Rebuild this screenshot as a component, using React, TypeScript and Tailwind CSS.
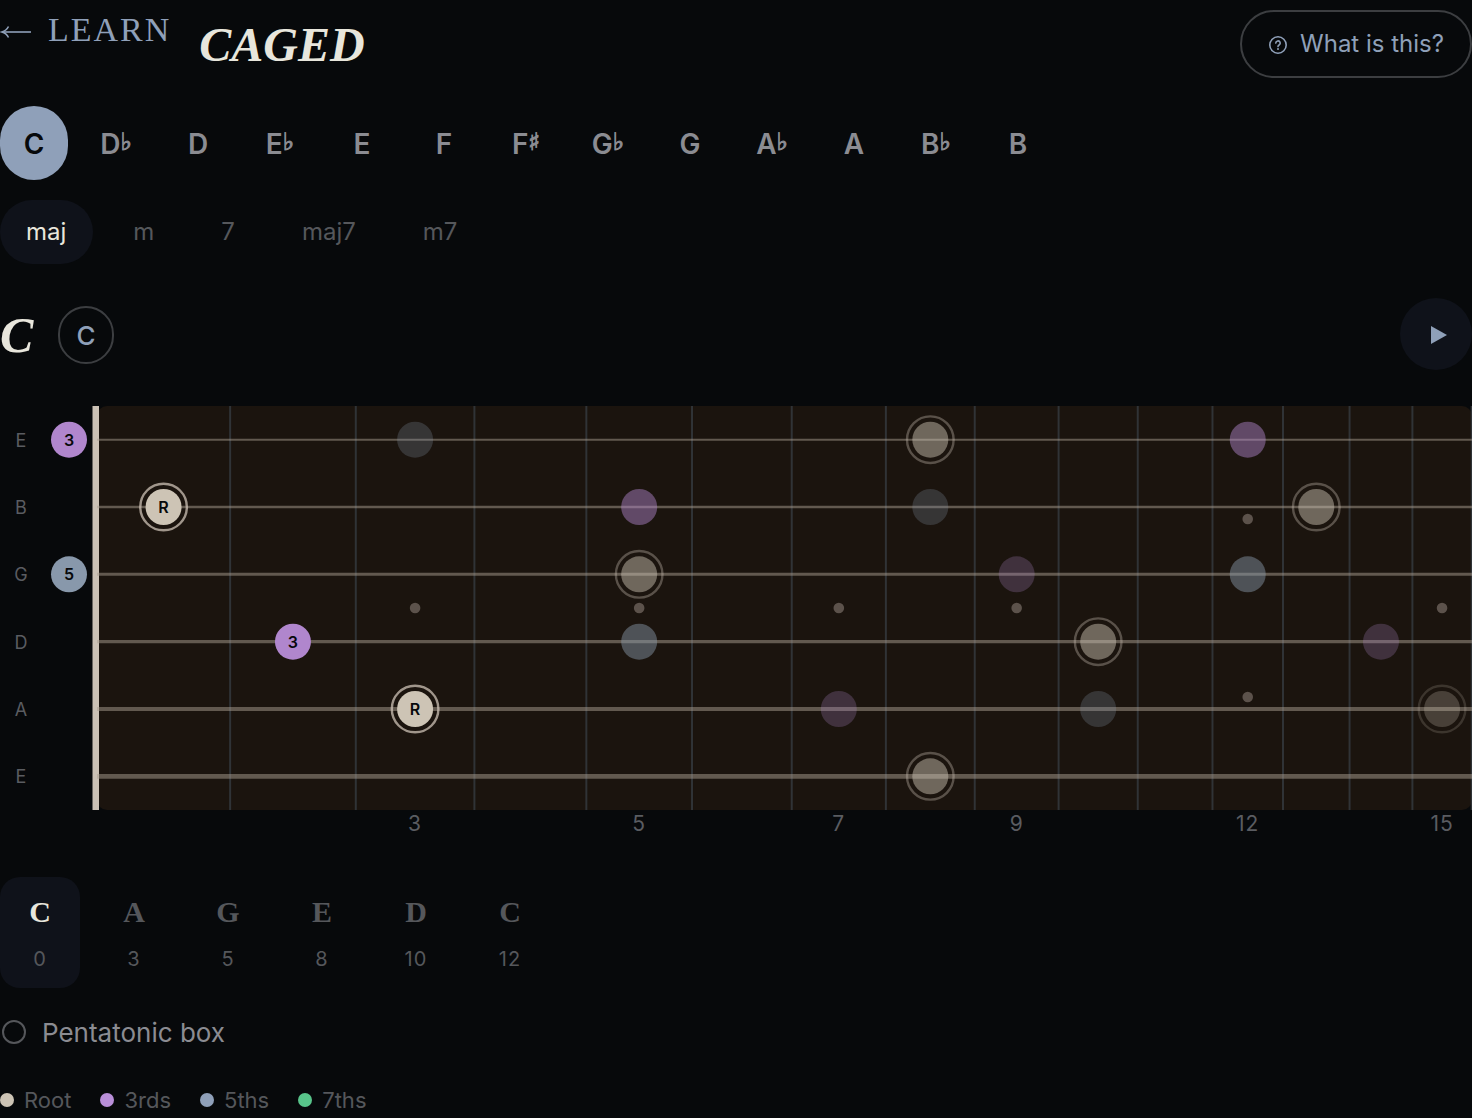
import { useState } from 'react';
import clsx from 'clsx';

type Role = 'root' | 'third' | 'fifth';
type Level = 'active' | 'near' | 'far';

interface FretNote {
  string: number;
  fret: number;
  role: Role;
  level: Level;
}

const ROOTS = ['C', 'D♭', 'D', 'E♭', 'E', 'F', 'F♯', 'G♭', 'G', 'A♭', 'A', 'B♭', 'B'];
const QUALITIES = ['maj', 'm', '7', 'maj7', 'm7'];
const STRINGS = ['E', 'B', 'G', 'D', 'A', 'E'];
const STRING_WIDTHS = [2, 2.6, 3, 3.4, 4, 4.6];

const SHAPES = [
  { name: 'C', fret: 0 },
  { name: 'A', fret: 3 },
  { name: 'G', fret: 5 },
  { name: 'E', fret: 8 },
  { name: 'D', fret: 10 },
  { name: 'C', fret: 12 },
];

const LEGEND = [
  { label: 'Root', dot: 'bg-[#cdc4b5]' },
  { label: '3rds', dot: 'bg-[#b98fd9]' },
  { label: '5ths', dot: 'bg-[#8fa0b9]' },
  { label: '7ths', dot: 'bg-[#58c48a]' },
];

const NOTES: FretNote[] = [
  { string: 0, fret: 0, role: 'third', level: 'active' },
  { string: 1, fret: 1, role: 'root', level: 'active' },
  { string: 2, fret: 0, role: 'fifth', level: 'active' },
  { string: 3, fret: 2, role: 'third', level: 'active' },
  { string: 4, fret: 3, role: 'root', level: 'active' },
  { string: 0, fret: 3, role: 'fifth', level: 'far' },
  { string: 0, fret: 8, role: 'root', level: 'near' },
  { string: 0, fret: 12, role: 'third', level: 'near' },
  { string: 1, fret: 5, role: 'third', level: 'near' },
  { string: 1, fret: 8, role: 'fifth', level: 'far' },
  { string: 1, fret: 13, role: 'root', level: 'near' },
  { string: 2, fret: 5, role: 'root', level: 'near' },
  { string: 2, fret: 9, role: 'third', level: 'far' },
  { string: 2, fret: 12, role: 'fifth', level: 'near' },
  { string: 3, fret: 5, role: 'fifth', level: 'near' },
  { string: 3, fret: 10, role: 'root', level: 'near' },
  { string: 3, fret: 14, role: 'third', level: 'far' },
  { string: 4, fret: 7, role: 'third', level: 'far' },
  { string: 4, fret: 10, role: 'fifth', level: 'far' },
  { string: 4, fret: 15, role: 'root', level: 'far' },
  { string: 5, fret: 8, role: 'root', level: 'near' },
];

const ROLE_FILL: Record<Role, string> = { root: '#cdc4b5', third: '#b086cd', fifth: '#8898ab' };
const ROLE_LABEL: Record<Role, string> = { root: 'R', third: '3', fifth: '5' };
const LEVEL_OPACITY: Record<Level, number> = { active: 1, near: 0.47, far: 0.25 };

const NUT_X = 97;
const SCALE = 2372;
const BOARD_H = 404;
const ROW_H = BOARD_H / 6;

// Equal-tempered fret spacing
const fretX = (n: number) => NUT_X + SCALE * (1 - Math.pow(2, -n / 12));
const noteX = (n: number) => (n === 0 ? 69 : (fretX(n - 1) + fretX(n)) / 2);
const stringY = (s: number) => ROW_H * (s + 0.5);

function Fretboard() {
  const frets = Array.from({ length: 15 }, (_, i) => i + 1);

  return (
    <svg
      viewBox="0 0 1472 436"
      className="block w-full h-auto font-['Inter',sans-serif]"
      role="img"
      aria-label="C major, C shape on the fretboard"
    >
      <rect x={NUT_X} y={0} width={1375} height={BOARD_H} rx={10} fill="#1b140e" />
      {frets.map((n) => (
        <line key={n} x1={fretX(n)} x2={fretX(n)} y1={0} y2={BOARD_H} stroke="#303336" strokeWidth={2} />
      ))}

      {[3, 5, 7, 9, 15].map((n) => (
        <circle key={n} cx={noteX(n)} cy={202} r={5.3} fill="#5c524b" />
      ))}
      <circle cx={noteX(12)} cy={113} r={5.3} fill="#5c524b" />
      <circle cx={noteX(12)} cy={291} r={5.3} fill="#5c524b" />

      <rect x={92.5} y={0} width={6.5} height={BOARD_H} fill="#cbc1b5" />
      {STRINGS.map((name, s) => (
        <g key={s}>
          <text x={21} y={stringY(s) + 7} textAnchor="middle" fontSize={18} fill="#5a5c61">
            {name}
          </text>
          <line
            x1={NUT_X}
            x2={1472}
            y1={stringY(s)}
            y2={stringY(s)}
            stroke="#aa9d90"
            strokeOpacity={0.5}
            strokeWidth={STRING_WIDTHS[s]}
          />
        </g>
      ))}

      {NOTES.map((note) => {
        const x = noteX(note.fret);
        const y = stringY(note.string);
        return (
          <g key={`${note.string}-${note.fret}`} opacity={LEVEL_OPACITY[note.level]}>
            {note.role === 'root' && (
              <circle cx={x} cy={y} r={23.3} fill="none" stroke="#cdc1b5" strokeOpacity={0.75} strokeWidth={2.4} />
            )}
            <circle cx={x} cy={y} r={18} fill={ROLE_FILL[note.role]} />
            {note.level === 'active' && (
              <text x={x} y={y + 6} textAnchor="middle" fontSize={16} fontWeight={600} fill="#07090b">
                {ROLE_LABEL[note.role]}
              </text>
            )}
          </g>
        );
      })}

      {[3, 5, 7, 9, 12, 15].map((n) => (
        <text key={n} x={noteX(n)} y={425} textAnchor="middle" fontSize={21} letterSpacing={1} fill="#5a5c61">
          {n}
        </text>
      ))}
    </svg>
  );
}

function NoteName({ name }: { name: string }) {
  return (
    <>
      {name[0]}
      {name.length > 1 && (
        <span className="align-[4px] font-['DejaVu_Sans',sans-serif] text-2xl leading-none font-bold [-webkit-text-stroke:1px]">
          {name[1]}
        </span>
      )}
    </>
  );
}

export default function App() {
  const [root, setRoot] = useState('C');
  const [quality, setQuality] = useState('maj');
  const [shape, setShape] = useState(0);
  const [pentatonic, setPentatonic] = useState(false);

  return (
    <main className="min-h-screen bg-[#07090b] pt-[10px] font-['Inter',sans-serif] text-[#8b8c92]">
      <header className="flex items-start">
        <a
          href="#learn"
          className="flex items-center gap-4 font-['Liberation_Serif',serif] text-[34px] leading-10 tracking-[2px] text-[#8fa0b9]"
        >
          <svg viewBox="0 0 32 14" className="mt-1 h-[14px] w-8" fill="none" stroke="currentColor" aria-hidden="true">
            <path d="M3 7h28" strokeWidth={1.6} />
            <path d="M8.500 1.500C7 4.500 4.500 6.300 1.800 7c2.700.7 5.200 2.500 6.700 5.500" strokeWidth={1.6} />
          </svg>
          LEARN
        </a>
        <h1 className="ml-7 pt-1 font-['Liberation_Serif',serif] text-5xl leading-[62px] font-bold italic text-[#e8e6dc]">
          CAGED
        </h1>
        <button
          type="button"
          className="ml-auto flex h-[68px] items-center gap-3 rounded-full border-2 border-[#3c3e41] px-[26px] text-2xl text-[#8fa0b9]"
        >
          <svg viewBox="0 0 20 20" className="mt-0.5 size-5" fill="none" stroke="currentColor" strokeWidth={1.6} aria-hidden="true">
            <circle cx="10" cy="10" r="8.2" />
            <path d="M7.8 8.1a2.2 2.2 0 1 1 3.3 1.9c-.8.45-1.1.8-1.1 1.6" strokeLinecap="round" />
            <circle cx="10" cy="14" r="1" fill="currentColor" stroke="none" />
          </svg>
          What is this?
        </button>
      </header>

      <div className="mt-7 flex flex-wrap gap-[14px]">
        {ROOTS.map((name) => (
          <button
            key={name}
            type="button"
            onClick={() => setRoot(name)}
            className={clsx(
              'h-[74px] w-[68px] rounded-full pt-0.5 text-[28px] font-semibold',
              root === name ? 'bg-[#8fa0b9] text-[#07090b]' : 'text-[#8b8c92]'
            )}
          >
            <NoteName name={name} />
          </button>
        ))}
      </div>

      <div className="mt-5 flex flex-wrap gap-[14px]">
        {QUALITIES.map((name) => (
          <button
            key={name}
            type="button"
            onClick={() => setQuality(name)}
            className={clsx(
              'h-16 rounded-full pr-[27px] pl-[26px] text-2xl',
              quality === name ? 'bg-[#0f121a] text-[#e8e6dc]' : 'text-[#55575b]'
            )}
          >
            {name}
          </button>
        ))}
      </div>

      <section className="mt-[34px] flex items-center">
        <div className="flex items-center pt-0.5">
          <h2 className="w-[58px] font-['Liberation_Serif',serif] text-[50px] leading-15 font-bold italic text-[#e8e6dc]">
            C
          </h2>
          <span className="flex h-[58px] w-14 items-center justify-center rounded-full border-2 border-[#3c3e41] text-[26px] font-medium text-[#8fa0b9]">
            C
          </span>
        </div>
        <button
          type="button"
          aria-label="Play chord"
          className="ml-auto flex size-[72px] items-center justify-center rounded-full bg-[#0f121a] pt-0.5 pl-1.5 text-[#8fa0b9]"
        >
          <svg viewBox="0 0 16 18" className="h-[18px] w-4" fill="currentColor" aria-hidden="true">
            <path d="M0 0 16 9 0 18Z" />
          </svg>
        </button>
      </section>

      <div className="mt-9">
        <Fretboard />
      </div>

      <div className="mt-[35px] flex flex-wrap gap-[14px]">
        {SHAPES.map((s, index) => (
          <button
            key={s.fret}
            type="button"
            onClick={() => setShape(index)}
            className={clsx(
              'flex h-[111px] w-20 flex-col items-center gap-[15px] rounded-[20px] pt-[17px]',
              shape === index ? 'bg-[#0f121a]' : 'bg-transparent'
            )}
          >
            <span
              className={clsx(
                "font-['Liberation_Serif',serif] text-3xl font-bold",
                shape === index ? 'text-[#e8e6dc]' : 'text-[#55575b]'
              )}
            >
              {s.name}
            </span>
            <span className="text-xl tracking-wider text-[#55575b]">{s.fret}</span>
          </button>
        ))}
      </div>

      <label className="mt-[23px] flex items-center gap-4 pl-0.5 text-[26px] leading-10">
        <input
          type="checkbox"
          checked={pentatonic}
          onChange={(e) => setPentatonic(e.target.checked)}
          className="size-6 appearance-none rounded-full border-2 border-[#55575b] checked:bg-[#8fa0b9]"
        />
        <span className="pt-0.5">Pentatonic box</span>
      </label>

      <ul className="mt-[31px] flex gap-[29px] text-[22px] leading-8 text-[#55575b]">
        {LEGEND.map((item) => (
          <li key={item.label} className="flex items-center gap-[10px]">
            <span className={clsx('size-[14px] rounded-full', item.dot)} />
            {item.label}
          </li>
        ))}
      </ul>
    </main>
  );
}
